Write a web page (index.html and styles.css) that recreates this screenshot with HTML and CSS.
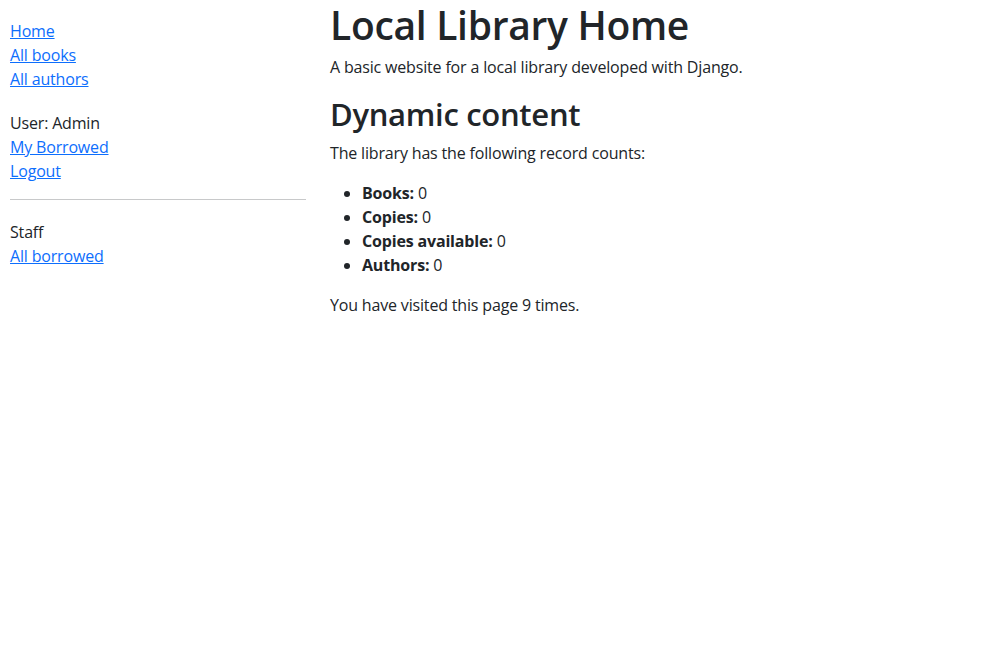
FILE: index.html
```html
<!DOCTYPE html>
<html lang="en">
<head>
<meta charset="utf-8">
<title>Local Library</title>
<link rel="stylesheet" href="styles.css">
</head>
<body>
<div class="page">
  <div class="sidebar">
    <ul class="sidebar-nav">
      <li><a href="#">Home</a></li>
      <li><a href="#">All books</a></li>
      <li><a href="#">All authors</a></li>
    </ul>
    <ul class="sidebar-nav">
      <li>User: Admin</li>
      <li><a href="#">My Borrowed</a></li>
      <li><a href="#">Logout</a></li>
    </ul>
    <hr>
    <ul class="sidebar-nav">
      <li>Staff</li>
      <li><a href="#">All borrowed</a></li>
    </ul>
  </div>
  <div class="content">
    <h1>Local Library Home</h1>
    <p>A basic website for a local library developed with Django.</p>
    <h2>Dynamic content</h2>
    <p>The library has the following record counts:</p>
    <ul class="counts">
      <li><strong>Books:</strong> 0</li>
      <li><strong>Copies:</strong> 0</li>
      <li><strong>Copies available:</strong> 0</li>
      <li><strong>Authors:</strong> 0</li>
    </ul>
    <p>You have visited this page 9 times.</p>
  </div>
</div>
</body>
</html>
```
FILE: styles.css
```css
* { box-sizing: border-box; }
body {
  margin: 0;
  font-family: "Open Sans", "Noto Sans", sans-serif;
  font-size: 16px;
  line-height: 1.5;
  letter-spacing: -0.17px;
  color: #212529;
  background: #fff;
}
a { color: #0d6efd; text-decoration: underline; }
.page { display: flex; align-items: flex-start; }
.sidebar { width: 330px; padding: 0 24px 0 10px; flex: none; }
.content { flex: 1; }
.sidebar-nav { margin: 19px 0 16px; padding: 0; list-style: none; }
.sidebar-nav + .sidebar-nav { margin-top: 20px; }
hr {
  margin: 16px 0 20px;
  border: 0;
  border-top: 1px solid #c8c9ca;
}
h1, h2 { margin: 0 0 8px; font-weight: 600; letter-spacing: -0.3px; }
h1 { font-size: 39px; line-height: 48px; padding-top: 1px; margin-bottom: 6px; }
h2 { font-size: 31px; line-height: 38px; }
p { margin: 0 0 16px; }
.counts { margin: 0 0 16px; padding-left: 32px; }
strong { font-weight: 700; }
```
